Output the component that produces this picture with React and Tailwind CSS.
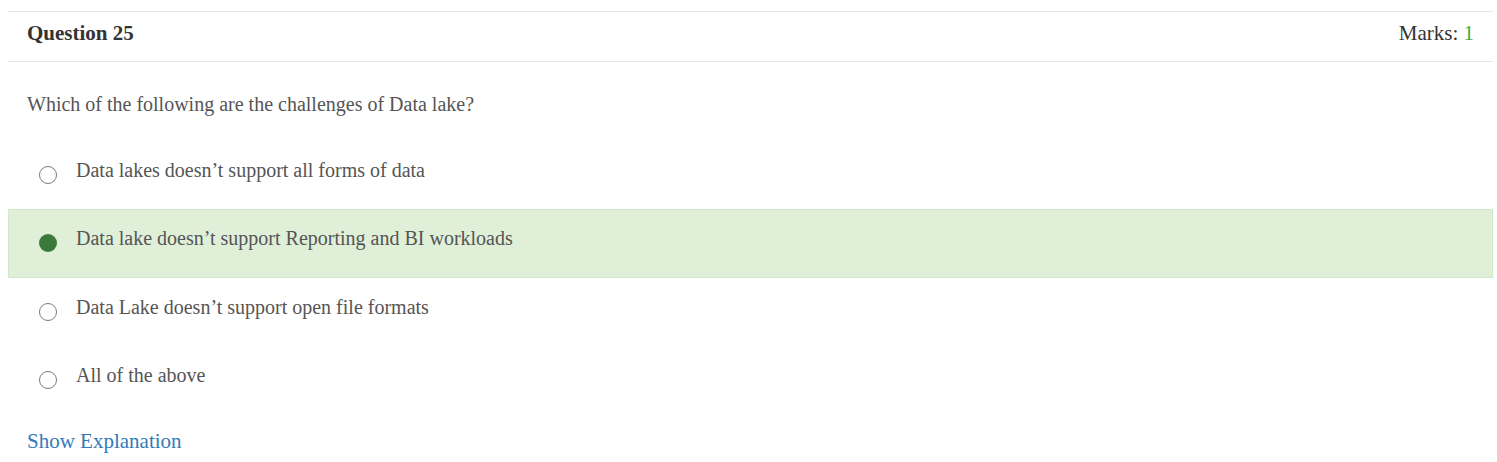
import React from 'react';

const options = [
    { id: 1, text: 'Data lakes doesn\u2019t support all forms of data' },
    { id: 2, text: 'Data lake doesn\u2019t support Reporting and BI workloads', selected: true },
    { id: 3, text: 'Data Lake doesn\u2019t support open file formats' },
    { id: 4, text: 'All of the above' },
];

const Radio = ({ checked }) => (
    checked ? (
        <span className="mt-[10px] block h-[18px] w-[18px] shrink-0 rounded-full bg-[#3b7a3b]" />
    ) : (
        <span className="mt-[10px] block h-[18px] w-[18px] shrink-0 rounded-full border-[1.5px] border-[#7a7a7a] bg-white" />
    )
);

const App = () => {
    return (
        <div className="min-h-[462px] bg-white font-['Liberation_Serif','Times_New_Roman',serif]">
            <div className="pl-2 pr-1 pt-[11px]">
                {/* Header */}
                <div className="flex h-[51px] items-center justify-between border-y border-[#e6e6e6] pb-[6px] pl-[19px] pr-[19px]">
                    <h4 className="text-[21px] font-bold text-[#333]">Question 25</h4>
                    <div className="text-[21px] text-[#333]">
                        Marks: <span className="text-[#3aa93a]">1</span>
                    </div>
                </div>

                {/* Question */}
                <div className="pl-[19px] pt-[27px] text-[20px] leading-[30px] text-[#555]">
                    Which of the following are the challenges of Data lake?
                </div>

                {/* Options */}
                <div className="mt-[22px] flex flex-col">
                    {options.map(opt => (
                        <div
                            key={opt.id}
                            className={`flex h-[68px] gap-[19px] border pl-[30px] pt-[14px] ${opt.selected ? 'h-[69px] border-[#d3e8c7] bg-[#dfefd8]' : 'border-transparent'}`}
                        >
                            <Radio checked={opt.selected} />
                            <span className="text-[20px] leading-[28px] text-[#555]">{opt.text}</span>
                        </div>
                    ))}
                </div>

                <div className="pl-[19px] pt-[12px]">
                    <a href="#" className="text-[21px] leading-[31px] text-[#337ab7]">Show Explanation</a>
                </div>
            </div>
        </div>
    );
};

export default App;
